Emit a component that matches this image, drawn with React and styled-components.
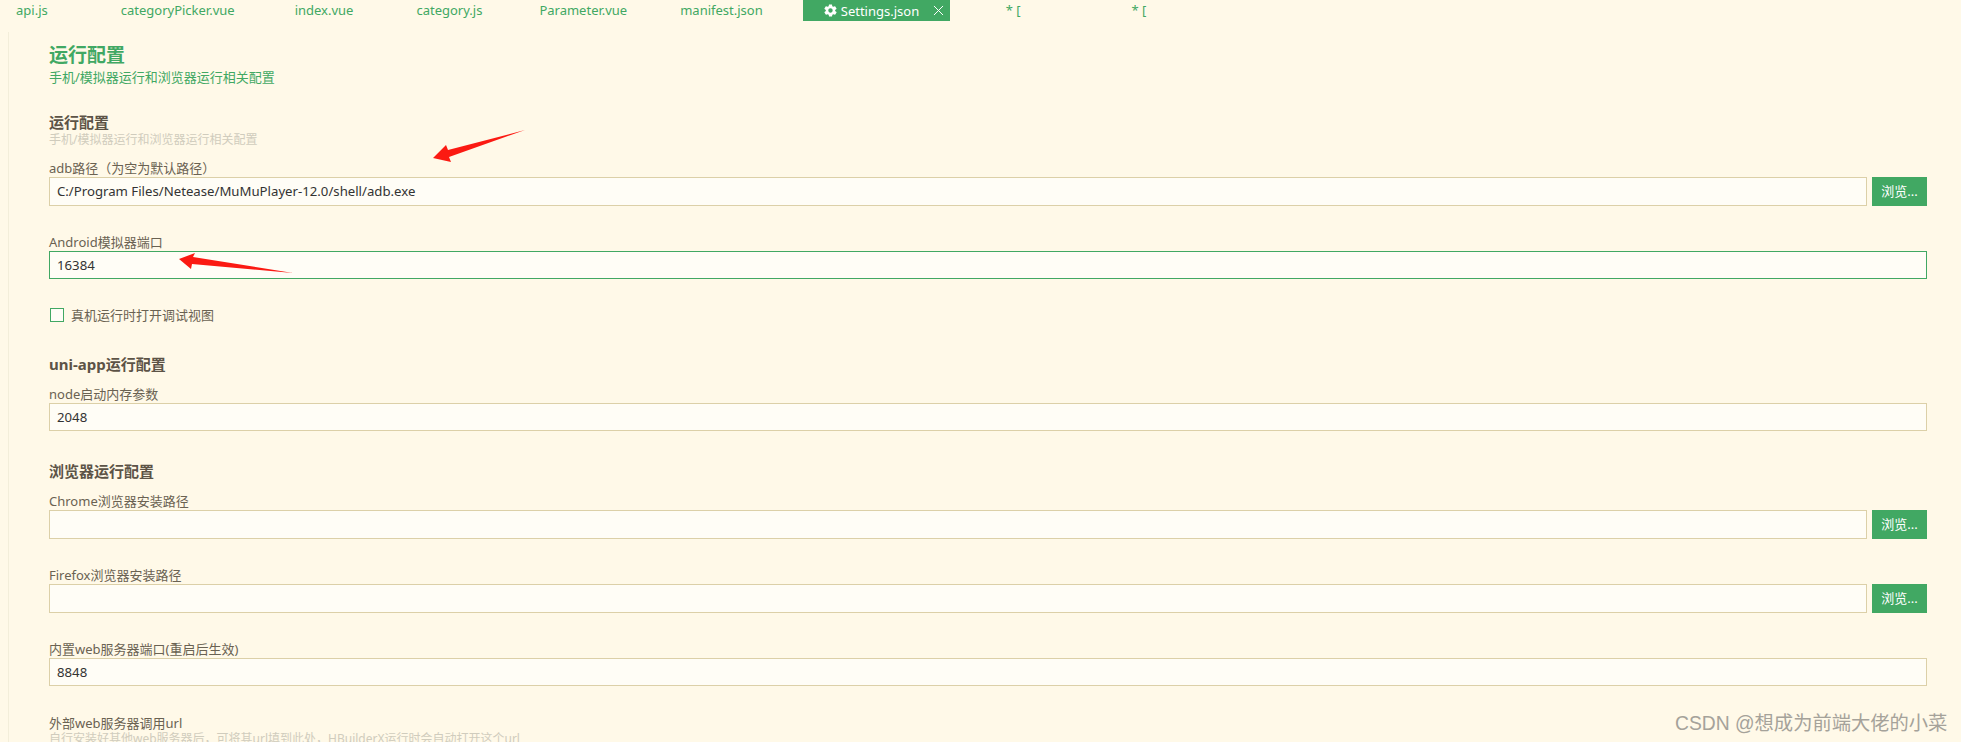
import React from "react"
import styled, { createGlobalStyle } from "styled-components"
import { IoMdSettings } from "react-icons/io"
import { X } from "lucide-react"

const GREEN = "#41a863"
const FONT = `"Noto Sans", "Noto Sans CJK SC", sans-serif`

const Global = createGlobalStyle`
    html, body {
        margin: 0;
        height: 742px;
        overflow: hidden;
        background: #fff9e8;
        font-family: ${FONT};
    }
`

const tabs = [
    { name: "api.js", gap: 16 },
    { name: "categoryPicker.vue", gap: 73 },
    { name: "index.vue", gap: 60 },
    { name: "category.js", gap: 63 },
    { name: "Parameter.vue", gap: 57 },
    { name: "manifest.json", gap: 53 },
]

export default function App() {
    return (
        <Page>
            <Global />
            <TabBar>
                {tabs.map((t) => (
                    <Tab key={t.name} $gap={t.gap}>{t.name}</Tab>
                ))}
                <ActiveTab>
                    <IoMdSettings size={15} />
                    <span>Settings.json</span>
                    <X size={17} strokeWidth={1.4} />
                </ActiveTab>
                <Tab $gap={56}>* [</Tab>
                <Tab $gap={111}>* [</Tab>
            </TabBar>
            <Panel>
                <Title>运行配置</Title>
                <TitleSub>手机/模拟器运行和浏览器运行相关配置</TitleSub>

                <Section $top={25}>运行配置</Section>
                <Hint>手机/模拟器运行和浏览器运行相关配置</Hint>
                <Field $top={12}>
                    <Label>adb路径（为空为默认路径）</Label>
                    <Row>
                        <Input>C:/Program Files/Netease/MuMuPlayer-12.0/shell/adb.exe</Input>
                        <Browse>浏览...</Browse>
                    </Row>
                </Field>
                <Field $top={27}>
                    <Label>Android模拟器端口</Label>
                    <Row>
                        <Input $focus>16384</Input>
                    </Row>
                </Field>
                <CheckRow>
                    <Check />
                    <CheckText>真机运行时打开调试视图</CheckText>
                </CheckRow>

                <Section $top={32}>uni-app运行配置</Section>
                <Field $top={10}>
                    <Label>node启动内存参数</Label>
                    <Row>
                        <Input>2048</Input>
                    </Row>
                </Field>

                <Section $top={30}>浏览器运行配置</Section>
                <Field $top={10}>
                    <Label>Chrome浏览器安装路径</Label>
                    <Row>
                        <Input />
                        <Browse>浏览...</Browse>
                    </Row>
                </Field>
                <Field $top={27}>
                    <Label>Firefox浏览器安装路径</Label>
                    <Row>
                        <Input />
                        <Browse>浏览...</Browse>
                    </Row>
                </Field>
                <Field $top={27}>
                    <Label>内置web服务器端口(重启后生效)</Label>
                    <Row>
                        <Input>8848</Input>
                    </Row>
                </Field>
                <Field $top={28}>
                    <Label>外部web服务器调用url</Label>
                    <Hint>自行安装好其他web服务器后，可将其url填到此处，HBuilderX运行时会自动打开这个url</Hint>
                </Field>
            </Panel>

            <Arrows viewBox="0 0 1961 742">
                <polygon points="433,158 446,145 448,150 525,130 449,157 451,162" fill="#fb1a12" />
                <polygon points="179,259 195,253 193,257 293,273 192,264 191,269" fill="#fb1a12" />
            </Arrows>
            <Watermark>CSDN @想成为前端大佬的小菜</Watermark>
        </Page>
    )
}

const Page = styled.div`
    position: relative;
    width: 1961px;
    height: 742px;
    overflow: hidden;
`

const TabBar = styled.div`
    display: flex;
    height: 21px;
`

const Tab = styled.div`
    margin-left: ${(p) => p.$gap}px;
    line-height: 20px;
    font-size: 13px;
    color: ${GREEN};
    white-space: nowrap;
`

const ActiveTab = styled.div`
    display: flex;
    align-items: center;
    margin-left: 40px;
    width: 147px;
    box-sizing: border-box;
    padding-left: 20px;
    background: ${GREEN};
    color: #fff;
    font-size: 13px;
    white-space: nowrap;
    span {
        margin: 0 11px 0 3px;
    }
`

const Panel = styled.div`
    margin: 11px 34px 0 8px;
    padding-left: 40px;
    border-left: 1px solid #f3eeda;
`

const Title = styled.div`
    padding-top: 11px;
    font-size: 19px;
    line-height: 24px;
    font-weight: 700;
    color: ${GREEN};
`

const TitleSub = styled.div`
    font-size: 13px;
    line-height: 20px;
    color: ${GREEN};
`

const Section = styled.div`
    margin-top: ${(p) => p.$top}px;
    padding-bottom: 1px;
    font-size: 15px;
    line-height: 20px;
    font-weight: 700;
    color: #5c5346;
`

const Hint = styled.div`
    font-size: 12px;
    line-height: 14px;
    color: #d0ccbd;
    white-space: nowrap;
`

const Field = styled.div`
    margin-top: ${(p) => p.$top}px;
`

const Label = styled.div`
    font-size: 13px;
    line-height: 18px;
    color: #6a6252;
    white-space: nowrap;
`

const Row = styled.div`
    display: flex;
    gap: 5px;
`

const Input = styled.div`
    flex: 1;
    box-sizing: border-box;
    min-height: 28px;
    padding-left: 7px;
    line-height: 26px;
    font-size: 13.2px;
    color: #333;
    background: #fffdf6;
    border: 1px solid ${(p) => (p.$focus ? GREEN : "#dcd0a8")};
`

const Browse = styled.div`
    width: 55px;
    height: 29px;
    line-height: 28px;
    text-align: center;
    font-size: 13px;
    color: #fff;
    background: ${GREEN};
`

const CheckRow = styled.div`
    display: flex;
    align-items: center;
    margin-top: 28px;
    height: 15px;
    padding-left: 1px;
`

const Check = styled.div`
    box-sizing: border-box;
    width: 14px;
    height: 14px;
    border: 1px solid ${GREEN};
    background: #fffdf6;
`

const CheckText = styled.div`
    margin-left: 7px;
    font-size: 13px;
    color: #6a6252;
`

const Arrows = styled.svg`
    position: absolute;
    left: 0;
    top: 0;
    width: 1961px;
    height: 742px;
    pointer-events: none;
`

const Watermark = styled.div`
    position: absolute;
    left: 1675px;
    top: 710px;
    font-family: "Liberation Sans", "Noto Sans CJK SC", sans-serif;
    font-size: 19.3px;
    line-height: 28px;
    color: #a5a29a;
    white-space: nowrap;
`
